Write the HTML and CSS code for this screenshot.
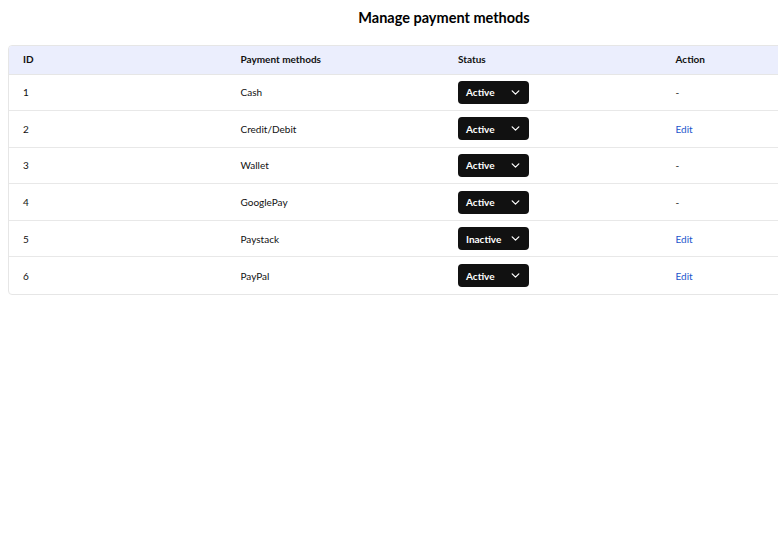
FILE: index.html
```html
<!DOCTYPE html>
<html lang="en">
<head>
  <meta charset="UTF-8">
  <title>Manage payment methods</title>
  <link rel="stylesheet" href="styles.css">
</head>
<body>
  <div class="page">
    <h1>Manage payment methods</h1>

    <div class="table-wrap">
      <table class="methods">
        <thead>
          <tr>
            <th>ID</th>
            <th>Payment methods</th>
            <th>Status</th>
            <th>Action</th>
          </tr>
        </thead>
        <tbody>
          <tr>
            <td>1</td>
            <td>Cash</td>
            <td><div class="status">Active <span class="chev"><svg viewBox="0 0 10 6" width="9" height="5"><path d="M1 1l4 4 4-4" fill="none" stroke="#fff" stroke-width="1.5" stroke-linecap="round" stroke-linejoin="round"/></svg></span></div></td>
            <td>-</td>
          </tr>
          <tr>
            <td>2</td>
            <td>Credit/Debit</td>
            <td><div class="status">Active <span class="chev"><svg viewBox="0 0 10 6" width="9" height="5"><path d="M1 1l4 4 4-4" fill="none" stroke="#fff" stroke-width="1.5" stroke-linecap="round" stroke-linejoin="round"/></svg></span></div></td>
            <td><a href="#" class="edit">Edit</a></td>
          </tr>
          <tr>
            <td>3</td>
            <td>Wallet</td>
            <td><div class="status">Active <span class="chev"><svg viewBox="0 0 10 6" width="9" height="5"><path d="M1 1l4 4 4-4" fill="none" stroke="#fff" stroke-width="1.5" stroke-linecap="round" stroke-linejoin="round"/></svg></span></div></td>
            <td>-</td>
          </tr>
          <tr>
            <td>4</td>
            <td>GooglePay</td>
            <td><div class="status">Active <span class="chev"><svg viewBox="0 0 10 6" width="9" height="5"><path d="M1 1l4 4 4-4" fill="none" stroke="#fff" stroke-width="1.5" stroke-linecap="round" stroke-linejoin="round"/></svg></span></div></td>
            <td>-</td>
          </tr>
          <tr>
            <td>5</td>
            <td>Paystack</td>
            <td><div class="status">Inactive <span class="chev"><svg viewBox="0 0 10 6" width="9" height="5"><path d="M1 1l4 4 4-4" fill="none" stroke="#fff" stroke-width="1.5" stroke-linecap="round" stroke-linejoin="round"/></svg></span></div></td>
            <td><a href="#" class="edit">Edit</a></td>
          </tr>
          <tr>
            <td>6</td>
            <td>PayPal</td>
            <td><div class="status">Active <span class="chev"><svg viewBox="0 0 10 6" width="9" height="5"><path d="M1 1l4 4 4-4" fill="none" stroke="#fff" stroke-width="1.5" stroke-linecap="round" stroke-linejoin="round"/></svg></span></div></td>
            <td><a href="#" class="edit">Edit</a></td>
          </tr>
        </tbody>
      </table>
    </div>
  </div>
</body>
</html>
```

FILE: styles.css
```css
* {
  box-sizing: border-box;
}

body {
  margin: 0;
  padding: 0 8px;
  font-family: Lato, "Noto Sans", sans-serif;
  color: #111;
  background: #fff;
  width: 888px;
}

.page {
  width: 872px;
}

h1 {
  font-size: 14.5px;
  font-weight: 700;
  color: #000;
  text-align: center;
  margin: 0;
  padding-top: 9px;
  height: 45px;
  line-height: 18px;
}

.table-wrap {
  border: 1px solid #e6e6e6;
  border-radius: 4px;
  overflow: hidden;
}

.methods {
  width: 100%;
  border-collapse: collapse;
  table-layout: fixed;
  font-size: 10px;
}

.methods th,
.methods td {
  text-align: left;
  padding: 0 0 0 14px;
}

.methods th {
  background: #ebeefd;
  font-weight: 700;
  height: 28px;
  padding-bottom: 1px;
  border-bottom: 1px solid #e6e6e6;
}

.methods td {
  height: 36.6px;
  border-bottom: 1px solid #e8e8e8;
}

.methods tbody tr:last-child td {
  border-bottom: none;
}

.status {
  display: flex;
  align-items: center;
  justify-content: space-between;
  width: 71px;
  height: 23px;
  padding: 0 9px 0 8px;
  background: #111;
  color: #fff;
  border-radius: 4px;
  font-weight: 700;
}

.chev {
  display: flex;
}

.edit {
  color: #2255cc;
  text-decoration: none;
}
```
